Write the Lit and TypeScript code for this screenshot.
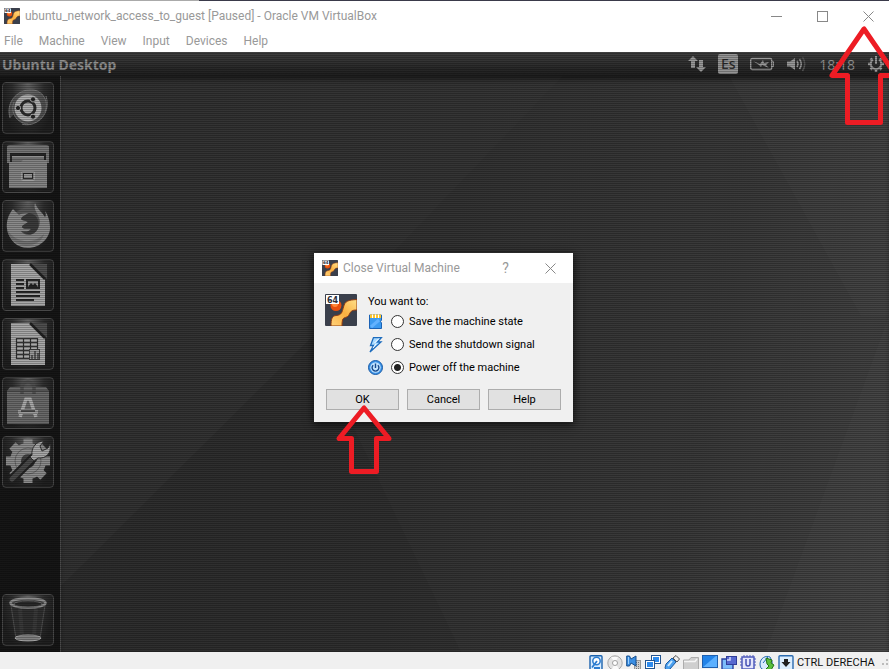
import { LitElement, html, svg, css, SVGTemplateResult } from "lit";
import { customElement, state } from "lit/decorators.js";

/* VirtualBox guest-type badge: orange figure on a slate tile with a "64" tag. */
const vmLogo = (id: string) => html`
  <svg viewBox="0 0 32 32" aria-hidden="true">
    <defs>
      <linearGradient id=${id} x1="1" y1="0" x2="0" y2="1">
        <stop offset="0" stop-color="#ffe08a" />
        <stop offset="0.5" stop-color="#fbb040" />
        <stop offset="1" stop-color="#ffd27a" />
      </linearGradient>
    </defs>
    <rect width="32" height="32" rx="1" fill="#3a3f4b" />
    <circle cx="11" cy="11.500" r="5.500" fill="#e8500f" />
    <circle cx="10" cy="10" r="3" fill="#ff8a3c" />
    <path
      d="M6 32 C6 25 7 22 11 21.500 C17 21 17 18 18.500 13 C20 7 23 6 32 5.500 V16 C27 16 26 17 24.500 20 C22 25 19 22 17.500 26 C17 28 17 30 17 32 Z"
      fill="url(#${id})" stroke="#8f3b12" stroke-width="1" />
    <rect x="1" y="1" width="13" height="9" fill="#fff" />
    <text x="7.500" y="8.500" text-anchor="middle" font-family="DejaVu Sans, sans-serif" font-size="8" font-weight="700" fill="#2a2e38">64</text>
  </svg>`;

const launcherIcons: { name: string; art: SVGTemplateResult }[] = [
  {
    name: "Search your computer",
    art: svg`
      <path d="M8 36 C3 18 18 6 32 8 C42 10 47 20 43 30 C41 38 34 43 26 42 C14 41 8 30 12 20 C15 13 24 9 32 13 Z" fill="#777" opacity="0.500" />
      <path d="M8 36 C3 18 18 6 32 8 M32 8 C42 10 47 20 43 30 M44 14 C50 34 32 46 20 42 M12 20 C8 30 14 41 26 42" fill="none" stroke="#777" stroke-width="1" />
      <circle cx="26" cy="26" r="13.500" fill="#b0b0b0" />
      <circle cx="26" cy="26" r="7" fill="none" stroke="#2b2b2b" stroke-width="3" />
      <g fill="#262626" stroke="#b0b0b0" stroke-width="1">
        <circle cx="16" cy="26" r="2.600" /><circle cx="31" cy="17.300" r="2.600" /><circle cx="31" cy="34.700" r="2.600" />
      </g>`,
  },
  {
    name: "Files",
    art: svg`
      <path d="M5 6 Q5 4 8 4 H44 Q47 4 47 6 L47 22 H5 Z" fill="#767676" />
      <path d="M8 12 H44 V22 H8 Z" fill="#262626" />
      <path d="M10 15 H42 V22 H10 Z" fill="#6e6e6e" /><path d="M10 16 H42" stroke="#b0b0b0" />
      <path d="M7 21 H19 L21 19 H45 V47 H7 Z" fill="#858585" />
      <rect x="21.500" y="32.500" width="9" height="5" fill="#999" stroke="#2b2b2b" />
      <rect x="19.500" y="30.500" width="13" height="9" rx="1" fill="none" stroke="#a0a0a0" />`,
  },
  {
    name: "Firefox",
    art: svg`
      <circle cx="26" cy="27" r="19" fill="#585858" />
      <path d="M33 3 C31 9 35 12 37 18 C40 25 34 35 27 35 C23 35 20 33 19 31 C23 32 27 32 29 29 C26 28 22 30 20 27 C20 25 24 24 26 22 C23 20 20 21 19 19 C20 16 24 15 26 13 C21 13 18 14 17 15 L11 9 C6 15 4 22 5 29 C7 40 15 48 26 48 C38 48 48 38 48 28 C48 21 46 15 43 11 C44 14 44 16 43 17 C40 12 35 9 33 3 Z" fill="#8a8a8a" />
      <path d="M19 19 C20 16 24 15 27 13 C35 14 38 21 36 28 C34 34 27 37 19 31 C23 32 27 32 29 29 C26 28 22 30 20 27 C20 25 24 24 26 22 C23 20 20 21 19 19 Z" fill="#3c3c3c" />
      <path d="M5 29 C12 42 30 46 42 34 C38 50 8 50 5 29 Z" fill="#747474" />`,
  },
  {
    name: "LibreOffice Writer",
    art: svg`
      <path d="M9 5 H28 L43 20 V47 H9 Z" fill="#a8a8a8" />
      <path d="M28 5 H45 V20 Z" fill="#505050" /><path d="M28 5 L43 20" stroke="#222" stroke-width="2.500" />
      <path d="M14 21 H22 M14 25 H22 M14 29 H22 M14 33 H38 M14 37 H38 M14 41 H32" stroke="#272727" stroke-width="2" />
      <rect x="25" y="21" width="12" height="8" fill="#999" stroke="#272727" stroke-width="2" />
      <path d="M26 28 L29 24 L31 26 L33 24 L36 28 Z" fill="#222" />`,
  },
  {
    name: "LibreOffice Calc",
    art: svg`
      <path d="M9 5 H28 L43 20 V47 H9 Z" fill="#a8a8a8" />
      <path d="M28 5 H45 V20 Z" fill="#505050" /><path d="M28 5 L43 20" stroke="#222" stroke-width="2.500" />
      <path d="M14.500 20.500 H35.500 V40.500 H14.500 Z M14 24.500 H36 M14 28.500 H36 M14 32.500 H36 M14 36.500 H36 M21.500 20 V40 M28.500 20 V40" fill="none" stroke="#303030" stroke-width="1.200" />
      <rect x="27.500" y="31.500" width="10" height="10" fill="#999" stroke="#444" />
      <path d="M30 41 V37 M33 41 V33 M36 41 V35" stroke="#444" stroke-width="1.500" />`,
  },
  {
    name: "Ubuntu Software",
    art: svg`
      <path d="M8 10 H44 L47 14 V47 H5 V14 Z" fill="#6a6a6a" />
      <path d="M5 14 H47" stroke="#3c3c3c" />
      <path d="M20 17 V10 C20 3 32 3 32 10 V17" fill="none" stroke="#505050" stroke-width="3.500" />
      <path d="M18 40 L24 22 H28 L34 40 M20 34 H32" fill="none" stroke="#ababab" stroke-width="3.500" />
      <path d="M16 35 H36" stroke="#9a9a9a" stroke-width="4" /><path d="M19 34 H33" stroke="#333" stroke-width="1.500" />`,
  },
  {
    name: "System Settings",
    art: svg`
      <circle cx="26" cy="25" r="12.500" fill="none" stroke="#8c8c8c" stroke-width="11" />
      <g stroke="#8c8c8c" stroke-width="9">
        <path d="M26 3 V11 M26 39 V47 M4 25 H12 M40 25 H48 M10.500 9.500 L16 15 M36 35 L41.500 40.500 M10.500 40.500 L16 35 M36 15 L41.500 9.500" />
      </g>
      <circle cx="26" cy="25" r="13" fill="none" stroke="#666" />
      <path d="M10 43 L31 22" stroke="#242424" stroke-width="9" stroke-linecap="round" />
      <path d="M10 43 L30 23" stroke="#4a4a4a" stroke-width="5" stroke-linecap="round" />
      <path d="M30 19 C29 12 34 5 42 5 L38 10 L40 15 L46 12 L48 8 C50 17 44 23 36 22 L32 25 L28 21 Z" fill="#a8a8a8" stroke="#333" />`,
  },
];

const trashArt = svg`
  <path d="M9 11 L14 45 C18 49 34 49 38 45 L43 11 Z" fill="#303030" />
  <path d="M9 11 L14 45 M43 11 L38 45" stroke="#505050" />
  <path d="M18 14 L20 42 M34 14 L32 42" stroke="#3a3a3a" stroke-width="4" />
  <ellipse cx="26" cy="44" rx="13" ry="3" fill="#808080" stroke="#a5a5a5" />
  <ellipse cx="26" cy="9" rx="17.500" ry="4.500" fill="#484848" stroke="#8c8c8c" stroke-width="2.500" />
  <ellipse cx="26" cy="10" rx="14" ry="3" fill="#292929" stroke="#666" />`;

const deviceIcons: { name: string; art: SVGTemplateResult }[] = [
  {
    name: "Hard disks",
    art: svg`<rect x="2" y="0.700" width="12" height="14.600" rx="1" fill="#d7ecff" stroke="#1b62ad" stroke-width="1.400" />
      <circle cx="8.500" cy="6" r="3.700" fill="#fff" stroke="#2b7cd0" stroke-width="1.500" /><path d="M4 12.500 L9 6 M6 13 H12" stroke="#2b7cd0" stroke-width="1.800" />`,
  },
  {
    name: "Optical drives",
    art: svg`<circle cx="8" cy="8" r="7.200" fill="#e2e2e2" stroke="#a8a8a8" /><path d="M8 8 L4 2 L11 2 Z M8 8 L12 14 L5 14 Z" fill="#fafafa" />
      <circle cx="8" cy="8" r="2.500" fill="#fff" stroke="#a0a0a0" />`,
  },
  {
    name: "Audio",
    art: svg`<rect x="8.500" y="5.500" width="6" height="10" fill="#ccc" stroke="#999" /><path d="M10.500 7 V15 M12.500 7 V15" stroke="#777" stroke-dasharray="1 1" />
      <path d="M0.700 1 H3.500 L5 4 L10 1 V11 L5 8 L3.500 11 H0.700 Z" fill="#3b8ee2" stroke="#174f8e" /><path d="M2.500 2 V9" stroke="#9ad0ff" />`,
  },
  {
    name: "Network",
    art: svg`<rect x="6.500" y="0.500" width="9" height="8" fill="#fff" stroke="#24548e" /><rect x="8" y="2" width="6" height="5" fill="#2d8bee" />
      <rect x="0.500" y="5.500" width="9" height="8" fill="#fff" stroke="#24548e" /><rect x="2" y="7" width="6" height="5" fill="#2d8bee" /><path d="M3 15 H8" stroke="#555" />`,
  },
  {
    name: "USB",
    art: svg`<path d="M1 13 L2 9 L8 3 L12 7 L6 14 Q3 17 1 13 Z" fill="#4ba0ef" stroke="#1d5ba2" /><path d="M4 11 L8 6" stroke="#cdeaff" stroke-width="2" />
      <path d="M9 3 L12 0.500 L15.500 4 L13 7 Z" fill="#eee" stroke="#555" />`,
  },
  {
    name: "Shared folders",
    art: svg`<path d="M0.500 5 H6 L8 2.500 H15.500 V15 H0.500 Z" fill="#cfcfcf" stroke="#adadad" /><path d="M1 6.500 H12 L14 4" fill="none" stroke="#f5f5f5" stroke-width="1.500" />`,
  },
  {
    name: "Display",
    art: svg`<rect x="0.500" y="0.500" width="15" height="12" fill="#2283e8" stroke="#1d5fae" /><path d="M1 12 L14 1 H15 V12 Z" fill="#5bb0ff" /><path d="M4 15 H12" stroke="#1d5fae" stroke-width="2" />`,
  },
  {
    name: "Recording",
    art: svg`<path d="M5 4 H1 V14.500 H12 V10" fill="#7cbcfa" stroke="#283f9e" stroke-width="1.400" /><rect x="5.500" y="1.500" width="10" height="8" fill="#5869cf" stroke="#303d98" /><path d="M6 5 H9 V2" fill="none" stroke="#d6dcff" stroke-width="1.500" />`,
  },
  {
    name: "Virtualization features",
    art: svg`<rect x="2" y="2" width="12" height="12" fill="#e4e6fb" stroke="#4e5abb" stroke-width="1.500" />
      <path d="M4 0 V2 M7 0 V2 M10 0 V2 M13 0 V2 M0 4 H2 M0 7 H2 M0 10 H2 M14 4 H16 M14 7 H16 M14 10 H16" stroke="#4e5abb" /><path d="M6 4 V9 Q6 11 8 11 Q10 11 10 9 V4" fill="none" stroke="#4552b5" stroke-width="1.500" />`,
  },
  {
    name: "Mouse integration",
    art: svg`<path d="M1 9 C1 3 7 0 11 2 L13 6 C14 12 9 16 5 15 C2 14 1 12 1 9 Z" fill="#d8ebff" stroke="#2469b0" /><path d="M4 8 L9 2" stroke="#2469b0" />
      <path d="M7 3 L13 5 L12 8 L15 10 L12 15 L6 15 L10 11 L8 9 Z" fill="#59bf3d" stroke="#257319" />`,
  },
  {
    name: "Keyboard capture",
    art: svg`<rect x="1" y="0.700" width="14" height="14.600" rx="1" fill="#dceeff" stroke="#2b6bb0" stroke-width="1.400" /><path d="M6 4 H10 V7 H12.500 L8 12 L3.500 7 H6 Z" fill="#222" />`,
  },
];

const closeOptions: { id: string; label: string; art: SVGTemplateResult }[] = [
  {
    id: "save",
    label: "Save the machine state",
    art: svg`<path d="M1.500 1 H13.500 V6 L12.500 7.500 L13.500 9 V14.500 H1.500 Z" fill="#3c9af0" stroke="#1b62b5" />
      <path d="M2 0.500 H13 V4 H2 Z" fill="#ffc62b" /><path d="M4.500 0.500 V4 M7.500 0.500 V4 M10.500 0.500 V4" stroke="#fff" /><path d="M3 13 L11 6" stroke="#62b2ff" stroke-width="3" />`,
  },
  {
    id: "shutdown",
    label: "Send the shutdown signal",
    art: svg`<path d="M5.500 0.500 H13.500 L9.500 5 H13 L2 15 L5.500 8.500 H2.500 Z" fill="#a9daff" stroke="#1d6cbd" stroke-width="1.300" /><path d="M6.500 6 L11 1.500 M5 11 L8 7" stroke="#fff" />`,
  },
  {
    id: "poweroff",
    label: "Power off the machine",
    art: svg`<circle cx="7.500" cy="7.500" r="7" fill="#3b93e8" stroke="#1a5ba6" /><circle cx="7.500" cy="7.500" r="5.200" fill="#c2e4ff" />
      <path d="M5.200 5.200 A3.400 3.400 0 1 0 9.800 5.200 M7.500 3.500 V8" fill="none" stroke="#17498c" stroke-width="1.400" />`,
  },
];

@customElement("app-root")
export class AppRoot extends LitElement {
  @state() private choice = "poweroff";

  static styles = css`
    :host {
      display: flex;
      flex-direction: column;
      position: relative;
      height: 100vh;
      overflow: hidden;
      background: #fff;
      font-family: Roboto, "Noto Sans", sans-serif;
      font-size: 12px;
      color: #999;
    }
    * { box-sizing: border-box; }
    button {
      margin: 0;
      padding: 0;
      border: 0;
      background: none;
      font: inherit;
      color: inherit;
    }
    svg { display: block; width: 100%; height: 100%; }
    .edge { flex: none; height: 1px; background: linear-gradient(90deg, #aaa 199px, #3a3a4a 199px); }
    .titlebar { flex: none; display: flex; align-items: center; height: 30px; padding-left: 4px; }
    .small-logo { flex: none; width: 16px; height: 16px; margin-right: 5px; }
    .title { flex: 1; margin: 0; font-size: 12px; font-weight: 400; white-space: nowrap; }
    .window-controls { display: flex; gap: 13px; padding-right: 4px; }
    .window-button { display: grid; place-items: center; width: 33px; height: 28px; }
    .window-button svg { width: 11px; height: 11px; }
    .menus { flex: none; display: flex; gap: 16px; height: 21px; padding-left: 4px; line-height: 21px; }

    .guest {
      flex: 1;
      min-height: 0;
      position: relative;
      display: flex;
      flex-direction: column;
      background: #303030;
    }
    .panel {
      flex: none;
      display: flex;
      align-items: center;
      height: 24px;
      padding: 0 4px 0 2px;
      background: linear-gradient(#404040, #1e1e1e);
      color: #909090;
      font-family: "Noto Sans", sans-serif;
      font-size: 14px;
    }
    .panel-title { flex: 1; font-weight: 700; }
    .indicators { display: flex; align-items: center; gap: 12px; }
    .transfer { width: 18px; height: 18px; }
    .layout {
      width: 20px;
      height: 20px;
      border-radius: 2px;
      background: #959595;
      color: #2c2c2c;
      line-height: 20px;
      text-align: center;
      font-weight: 500;
    }
    .battery { width: 24px; height: 14px; }
    .sound { width: 21px; height: 16px; }
    .gear { width: 18px; height: 18px; }
    .workspace { flex: 1; min-height: 0; display: flex; }
    .launcher {
      flex: none;
      display: flex;
      flex-direction: column;
      gap: 7px;
      width: 61px;
      padding: 6px 0 6px 2px;
      border-right: 1px solid #4a4a4a;
      background: #161616;
    }
    .tile {
      flex: none;
      width: 52px;
      height: 52px;
      border: 1px solid #484848;
      border-radius: 4px;
      background: radial-gradient(ellipse at top, #666, #303030 45%, #202020 80%);
    }
    .trash { margin-top: auto; }
    .wallpaper {
      flex: 1;
      min-width: 0;
      background: linear-gradient(100deg, #303030, #333 45%, #3a3a3a 75%, #454545);
      box-shadow: inset 0 5px 5px -2px #181818;
    }
    .scanlines {
      position: absolute;
      inset: 0;
      pointer-events: none;
      background: repeating-linear-gradient(transparent 0 1px, rgba(0, 0, 0, 0.25) 1px 2px);
    }

    .status {
      flex: none;
      display: flex;
      align-items: flex-start;
      justify-content: flex-end;
      gap: 3px;
      height: 17px;
      padding: 3px 1px 0 0;
      overflow: hidden;
      background: #f0f0f0;
      color: #111;
      font-size: 11px;
      line-height: 16px;
    }
    .device { flex: none; width: 16px; height: 16px; }
    .host-key { width: 78px; white-space: nowrap; }
    .grip { width: 10px; height: 14px; }

    .modal-layer {
      position: absolute;
      inset: 0;
      display: grid;
      place-items: center;
      padding: 6px 2px 0 0;
    }
    .dialog {
      position: relative;
      width: 259px;
      background: #f0f0f0;
      box-shadow: 0 2px 8px 1px rgba(0, 0, 0, 0.6);
      color: #000;
      font-size: 11px;
    }
    .dialog-bar { display: flex; align-items: center; height: 30px; padding-left: 8px; background: #fff; color: #999; }
    .dialog-bar .window-button { width: 45px; font-size: 14px; }
    .dialog-content { display: flex; gap: 11px; padding: 11px 11px 0 11px; }
    .large-logo { flex: none; width: 32px; height: 32px; }
    .options { margin: 0; padding: 0; border: 0; min-width: 0; }
    .options legend { padding: 0; height: 16px; line-height: 16px; }
    .option { display: flex; align-items: center; height: 23px; }
    .option-icon { width: 16px; height: 16px; margin-right: 7px; }
    .radio {
      appearance: none;
      width: 13px;
      height: 13px;
      margin: 0 5px 0 0;
      border: 1px solid #333;
      border-radius: 50%;
      background: #fff;
    }
    .radio:checked { background: radial-gradient(circle, #222 3px, #fff 4px); }
    .actions { display: flex; gap: 8px; padding: 10px 12px 12px; }
    .action { flex: 1; height: 21px; border: 1px solid #adadad; background: #e1e1e1; }

    .arrow { position: absolute; pointer-events: none; fill: none; stroke: #ed1c24; stroke-width: 5; stroke-linejoin: round; }
    .arrow-close { top: 24px; right: 0; width: 61px; height: 103px; }
    .arrow-ok { top: 150px; left: 20px; width: 60px; height: 74px; }
  `;

  private closeGlyph = html`<svg viewBox="0 0 11 11" aria-hidden="true"><path d="M0.500 0.500 L10.500 10.500 M10.500 0.500 L0.500 10.500" stroke="#888" fill="none" /></svg>`;

  private renderPanel() {
    return html`
      <div class="panel">
        <span class="panel-title">Ubuntu Desktop</span>
        <div class="indicators">
          <svg class="transfer" viewBox="0 0 18 18" fill="#999" aria-hidden="true">
            <path d="M5 1 L10 6 H7 V13 H3 V6 H0 Z M13 17 L8 12 H11 V5 H15 V12 H18 Z" />
          </svg>
          <span class="layout">Es</span>
          <svg class="battery" viewBox="0 0 24 14" aria-hidden="true">
            <rect x="0.700" y="1.500" width="21" height="11" rx="1.500" fill="none" stroke="#999" stroke-width="1.400" />
            <path d="M22 4.500 H23.500 V9.500 H22" fill="none" stroke="#999" />
            <path d="M3 4 L10 7 L13 3 L14 6 L19 5 L16 8 L19 11 L12 8 L11 10 L9 8 Z" fill="#999" />
          </svg>
          <svg class="sound" viewBox="0 0 21 16" aria-hidden="true">
            <path d="M1 5.500 H4 L9 2 V14 L4 10.500 H1 Z" fill="#999" />
            <path d="M11 5 Q13 8 11 11 M13.500 3 Q17 8 13.500 13" fill="none" stroke="#999" stroke-width="1.500" />
            <path d="M16.500 1 Q21 8 16.500 15" fill="none" stroke="#555" stroke-width="1.500" />
          </svg>
          <span class="clock">18:18</span>
          <svg class="gear" viewBox="0 0 18 18" fill="none" stroke="#999" aria-hidden="true">
            <path d="M6 4.500 A5.300 5.300 0 1 0 12 4.500" stroke-width="2" />
            <path d="M9 1 V9" stroke-width="2" />
            <path d="M3.500 9 H1 M14.500 9 H17 M5 13 L3.500 14.500 M13 13 L14.500 14.500 M9 14.500 V17 M5 5 L3.500 3.500 M13 5 L14.500 3.500" stroke-width="2.500" />
          </svg>
        </div>
      </div>`;
  }

  private renderDialog() {
    return html`
      <div class="modal-layer">
        <section class="dialog" role="dialog" aria-labelledby="dialog-title">
          <header class="dialog-bar">
            <span class="small-logo">${vmLogo("logo-dialog")}</span>
            <h2 class="title" id="dialog-title">Close Virtual Machine</h2>
            <button class="window-button" aria-label="What's this?">?</button>
            <button class="window-button" aria-label="Close dialog">${this.closeGlyph}</button>
          </header>
          <div class="dialog-content">
            <span class="large-logo">${vmLogo("logo-large")}</span>
            <fieldset class="options">
              <legend>You want to:</legend>
              ${closeOptions.map(
                (o) => html`
                  <label class="option">
                    <svg class="option-icon" viewBox="0 0 16 16" aria-hidden="true">${o.art}</svg>
                    <input class="radio" type="radio" name="close" value=${o.id}
                      .checked=${this.choice === o.id} @change=${() => (this.choice = o.id)} />
                    ${o.label}
                  </label>`
              )}
            </fieldset>
          </div>
          <div class="actions">
            <button class="action">OK</button>
            <button class="action">Cancel</button>
            <button class="action">Help</button>
          </div>
          <svg class="arrow arrow-ok" viewBox="0 0 60 74" aria-hidden="true">
            <path d="M30 5 L5 35.500 H17.500 V68.500 H42.500 V35.500 H55 Z" />
          </svg>
        </section>
      </div>`;
  }

  render() {
    return html`
      <div class="edge"></div>
      <header class="titlebar">
        <span class="small-logo">${vmLogo("logo-window")}</span>
        <h1 class="title">ubuntu_network_access_to_guest [Paused] - Oracle VM VirtualBox</h1>
        <div class="window-controls">
          <button class="window-button" aria-label="Minimize"><svg viewBox="0 0 11 11"><path d="M0 5.500 H11" stroke="#888" /></svg></button>
          <button class="window-button" aria-label="Maximize"><svg viewBox="0 0 11 11"><rect x="0.500" y="0.500" width="10" height="10" fill="none" stroke="#888" /></svg></button>
          <button class="window-button" aria-label="Close">${this.closeGlyph}</button>
        </div>
      </header>
      <nav class="menus">
        ${["File", "Machine", "View", "Input", "Devices", "Help"].map((m) => html`<button class="menu">${m}</button>`)}
      </nav>
      <main class="guest">
        ${this.renderPanel()}
        <div class="workspace">
          <nav class="launcher" aria-label="Launcher">
            ${launcherIcons.map(
              (i) => html`<button class="tile" aria-label=${i.name}><svg viewBox="1 1 50 50">${i.art}</svg></button>`
            )}
            <button class="tile trash" aria-label="Trash"><svg viewBox="1 1 50 50">${trashArt}</svg></button>
          </nav>
          <div class="wallpaper">
            <svg viewBox="0 0 828 576" preserveAspectRatio="none" aria-hidden="true">
              <path d="M0 0 H502 L250 262 L0 510 Z" fill="#fff" opacity="0.010" />
              <path d="M0 510 L250 262 L400 576 H0 Z" fill="#000" opacity="0.050" />
              <path d="M668 0 H828 V240 L800 240 Z" fill="#fff" opacity="0.020" />
              <path d="M828 240 V576 H705 Z" fill="#fff" opacity="0.020" />
            </svg>
          </div>
        </div>
        <div class="scanlines"></div>
      </main>
      <footer class="status">
        ${deviceIcons.map((d) => html`<svg class="device" viewBox="0 0 16 16" role="img" aria-label=${d.name}>${d.art}</svg>`)}
        <span class="host-key">CTRL DERECHA</span>
        <svg class="grip" viewBox="0 0 10 14" fill="#bbb" aria-hidden="true">
          <path d="M8 4 h2 v2 h-2 Z M4 8 h2 v2 h-2 Z M8 8 h2 v2 h-2 Z" />
        </svg>
      </footer>
      ${this.renderDialog()}
      <svg class="arrow arrow-close" viewBox="0 0 61 103" aria-hidden="true">
        <path d="M36 5 L4 51.500 H19.500 V98.500 H52.500 V51.500 H68 Z" />
      </svg>`;
  }
}
